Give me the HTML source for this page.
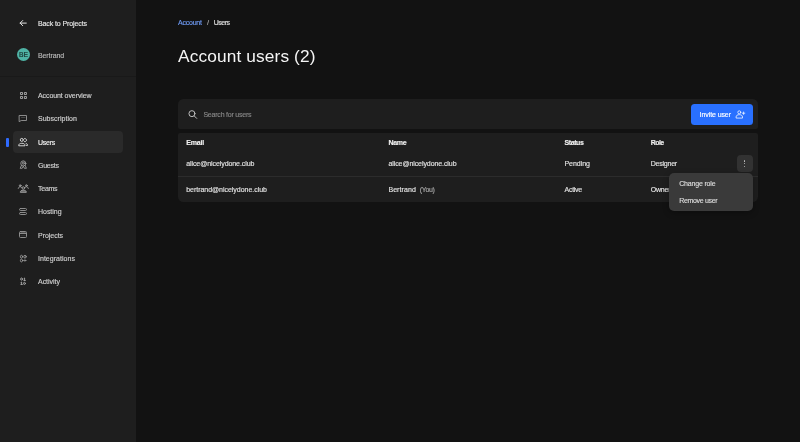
<!DOCTYPE html>
<html><head><meta charset="utf-8">
<style>
*{box-sizing:border-box;margin:0;padding:0}
html,body{width:800px;height:442px;overflow:hidden;background:#121212;font-family:"Liberation Sans",sans-serif;color:#e6e6e6;font-size:7px}
#root{position:absolute;left:0;top:0;width:800px;height:442px;will-change:transform}
.b{position:absolute}
.t{position:absolute;white-space:nowrap;line-height:10px;-webkit-text-stroke:0.150px currentColor}
.i{position:absolute;display:block;fill:none;stroke-linecap:round;stroke-linejoin:round;overflow:visible}
</style></head><body><div id="root">

<div class="b" style="left:0;top:0;width:136px;height:442px;background:#1e1e1e"></div>
<div class="b" style="left:0;top:75.700px;width:136px;height:1px;background:#191919"></div>
<div class="b" style="left:13px;top:131px;width:110px;height:22px;background:#2a2a2a;border-radius:4px"></div>
<div class="b" style="left:6px;top:138px;width:2.500px;height:8.500px;background:#2f6bff;border-radius:1px"></div>
<svg class="i" style="left:16px;top:16px;width:16px;height:16px;stroke:#e6e6e6;stroke-width:2.5" viewBox="-7.100 -7.100 16 16"><g transform="scale(0.39583) translate(-12,-12)"><path d="M20 12H4.500M11 5.500L4.500 12l6.500 6.500"/></g></svg>
<div class="t" style="left:38px;top:19.00px;font-size:7.0px;letter-spacing:-0.1px;color:#e6e6e6;">Back to Projects</div>
<div class="b" style="left:16.900px;top:48.200px;width:13px;height:13px;border-radius:50%;background:#4fb3a5"></div>
<div class="t" style="left:18.9px;top:49.98px;font-size:6.7px;letter-spacing:0.1px;color:#17302d;-webkit-text-stroke:0.2px #17302d;">BE</div>
<div class="t" style="left:38px;top:51.00px;font-size:7.0px;letter-spacing:-0.1px;color:#b8b8b8;">Bertrand</div>
<svg class="i" style="left:16px;top:88px;width:16px;height:16px;stroke:#b4b4b4;stroke-width:0.8" viewBox="-7.500 -7.500 16 16"><g stroke-width="1.050" stroke="#9c9c9c"><rect x="-3" y="-3" width="2" height="2" rx="0.400"/><rect x="0.900" y="-3" width="2.050" height="2" rx="0.400"/><rect x="-3" y="1" width="2" height="2" rx="0.400"/><rect x="0.900" y="1" width="2.050" height="2" rx="0.400"/></g></svg>
<div class="t" style="left:38px;top:91.00px;font-size:7.0px;letter-spacing:-0.08px;color:#cfcfcf;">Account overview</div>
<svg class="i" style="left:16px;top:111px;width:16px;height:16px;stroke:#b4b4b4;stroke-width:0.8" viewBox="-7.000 -7.000 16 16"><g stroke-width="0.950" stroke="#909090"><path d="M-3.500 -2.500H3.500V2.500H-1.800L-3.500 3.500Z"/><path d="M-1.500 -0.500H2" stroke="#4a4a4a"/></g></svg>
<div class="t" style="left:38px;top:114.00px;font-size:7.0px;letter-spacing:0.03px;color:#cfcfcf;">Subscription</div>
<svg class="i" style="left:16px;top:135px;width:16px;height:16px;stroke:#e0e0e0;stroke-width:0.8" viewBox="-7.300 -7.000 16 16"><g stroke-width="0.900"><circle cx="-1.500" cy="-2.100" r="1.500"/><path d="M-4.600 3.400c0-1.500 1.150-2.100 3.150-2.100s3.150.600 3.150 2.100z"/><path d="M1.100 -3.400A1.600 1.600 0 1 1 1.100 -0.400M2.800 1.400c1 .200 1.450.900 1.450 2H3"/></g></svg>
<div class="t" style="left:38px;top:138.00px;font-size:7.0px;letter-spacing:-0.25px;color:#f2f2f2;">Users</div>
<svg class="i" style="left:16px;top:157px;width:16px;height:16px;stroke:#b4b4b4;stroke-width:0.8" viewBox="-7.300 -7.700 16 16"><g stroke-width="0.850" stroke="#a2a2a2"><circle cx="0" cy="-1.300" r="2.550"/><circle cx="0" cy="-1.500" r="1.050"/><path d="M-1.900 0.800L-3.100 3.600H-1.100L0 1.500L1.100 3.600H3.100L1.900 0.800"/></g></svg>
<div class="t" style="left:38px;top:161.00px;font-size:7.0px;letter-spacing:-0.25px;color:#cfcfcf;">Guests</div>
<svg class="i" style="left:16px;top:181px;width:16px;height:16px;stroke:#b4b4b4;stroke-width:0.8" viewBox="-7.300 -7.500 16 16"><g stroke-width="0.850" stroke="#a6a6a6"><circle cx="0" cy="-0.500" r="1.250"/><path d="M-3 3.500c0-1.300 1.100-1.800 3-1.800s3 .500 3 1.800z" fill="#6a6a6a"/><circle cx="-3.100" cy="-2.900" r="0.850"/><circle cx="3.100" cy="-2.900" r="0.850"/><path d="M-5 -0.100c.300-1.100 1-1.700 1.900-1.700s1.200.300 1.500.800M5 -0.100c-.300-1.100-1-1.700-1.900-1.700s-1.200.300-1.500.800"/></g></svg>
<div class="t" style="left:38px;top:184.00px;font-size:7.0px;letter-spacing:-0.25px;color:#cfcfcf;">Teams</div>
<svg class="i" style="left:16px;top:204px;width:16px;height:16px;stroke:#b4b4b4;stroke-width:0.8" viewBox="-7.000 -7.500 16 16"><g stroke-width="0.950" stroke="#929292"><rect x="-3.500" y="-3" width="7" height="2" rx="1"/><rect x="-3.500" y="1" width="7" height="2" rx="1"/></g></svg>
<div class="t" style="left:38px;top:207.00px;font-size:7.0px;letter-spacing:-0.03px;color:#cfcfcf;">Hosting</div>
<svg class="i" style="left:16px;top:227px;width:16px;height:16px;stroke:#b4b4b4;stroke-width:0.8" viewBox="-7.000 -7.500 16 16"><g stroke-width="0.950" stroke="#929292"><rect x="-3.500" y="-3" width="7" height="6" rx="1"/><path d="M-3.500 -1H3.500"/><path d="M-2 -2H2.500" stroke="#555555"/><path d="M-2 1H2.200" stroke="#333333"/></g></svg>
<div class="t" style="left:38px;top:231.00px;font-size:7.0px;letter-spacing:-0.03px;color:#cfcfcf;">Projects</div>
<svg class="i" style="left:16px;top:251px;width:16px;height:16px;stroke:#b4b4b4;stroke-width:0.8" viewBox="-7.250 -7.500 16 16"><g stroke-width="0.900" stroke="#9c9c9c"><ellipse cx="-1.750" cy="-1.800" rx="1.100" ry="1.400"/><ellipse cx="1.750" cy="-1.800" rx="1.200" ry="1.400"/><ellipse cx="-1.750" cy="2" rx="1.100" ry="1.400"/><path d="M0.500 2H2.800" stroke="#b0b0b0"/><path d="M1.650 0.900V3.100" stroke="#6a6a6a"/></g></svg>
<div class="t" style="left:38px;top:254.00px;font-size:7.0px;letter-spacing:0.03px;color:#cfcfcf;">Integrations</div>
<svg class="i" style="left:16px;top:274px;width:16px;height:16px;stroke:#b4b4b4;stroke-width:0.8" viewBox="-7.000 -7.400 16 16"><g stroke-width="0.950" stroke="#a4a4a4"><ellipse cx="-1.450" cy="-2.300" rx="0.950" ry="1.100"/><path d="M1 -2.900L1.600 -3.400V-1M0.900 -0.900H2.300"/><path d="M-2.100 1.100L-1.400 0.600V3M-2.100 3.100H-0.700"/><ellipse cx="1.450" cy="2" rx="0.950" ry="1.100"/></g></svg>
<div class="t" style="left:38px;top:277.00px;font-size:7.0px;letter-spacing:-0.03px;color:#cfcfcf;">Activity</div>
<div class="t" style="left:178px;top:18.00px;font-size:7.0px;letter-spacing:-0.23px;color:#6f9bf5;">Account</div>
<div class="t" style="left:207.1px;top:17.59px;font-size:7.5px;letter-spacing:-0.1px;color:#a8a8a8;">/</div>
<div class="t" style="left:213.7px;top:18.00px;font-size:7.0px;letter-spacing:-0.48px;color:#e0e0e0;">Users</div>
<div class="t" id="h1" style="left:178px;top:44px;font-size:17.300px;line-height:24px;color:#f5f5f5;letter-spacing:0.130px;-webkit-text-stroke:0">Account users (2)</div>
<div class="b" style="left:177.800px;top:99.200px;width:580px;height:29.800px;background:#1e1e1e;border-radius:5.500px 5.500px 2px 2px"></div>
<svg class="i" style="left:185px;top:107px;width:16px;height:16px;stroke:#c0c0c0;stroke-width:2.3" viewBox="-7.600 -7.300 16 16"><g transform="scale(0.42917) translate(-12,-12)"><circle cx="10.500" cy="10.500" r="7"/><path d="M15.800 15.800L21.500 21.500"/></g></svg>
<div class="t" style="left:203.4px;top:110.00px;font-size:7.0px;letter-spacing:-0.21px;color:#868686;">Search for users</div>
<div class="b" style="left:691px;top:103.700px;width:62.300px;height:21.200px;background:#2970ff;border-radius:3.500px"></div>
<div class="t" style="left:699.6px;top:110.00px;font-size:7.0px;letter-spacing:-0.09px;color:#ffffff;">Invite user</div>
<svg class="i" style="left:732px;top:107px;width:16px;height:16px;stroke:#ffffff;stroke-width:0.75" viewBox="-7.300 -7.300 16 16"><circle cx="0" cy="-2" r="1.500"/><path d="M-3.200 3.400v-0.700c0-1.600 1.200-2.300 3.200-2.300s3.200.700 3.200 2.300v.700z"/><path d="M4.300 -2.300v2.400M3.100 -1.100h2.400"/></svg>
<div class="b" style="left:177.800px;top:132.800px;width:580px;height:68.900px;background:#1e1e1e;border-radius:2px 2px 5.500px 5.500px"></div>
<div class="b" style="left:177.800px;top:175.700px;width:580px;height:1px;background:#2c2c2c"></div>
<div class="t" style="left:186.2px;top:138.00px;font-size:7.0px;letter-spacing:-0.17px;color:#f0f0f0;font-weight:bold;">Email</div>
<div class="t" style="left:388.4px;top:138.00px;font-size:7.0px;letter-spacing:-0.27px;color:#f0f0f0;font-weight:bold;">Name</div>
<div class="t" style="left:564.5px;top:138.00px;font-size:7.0px;letter-spacing:-0.42px;color:#f0f0f0;font-weight:bold;">Status</div>
<div class="t" style="left:650.7px;top:138.00px;font-size:7.0px;letter-spacing:-0.55px;color:#f0f0f0;font-weight:bold;">Role</div>
<div class="t" style="left:186.2px;top:159.00px;font-size:7.0px;letter-spacing:-0.08px;color:#e2e2e2;">alice@nicelydone.club</div>
<div class="t" style="left:388.4px;top:159.00px;font-size:7.0px;letter-spacing:-0.08px;color:#e2e2e2;">alice@nicelydone.club</div>
<div class="t" style="left:564.5px;top:159.00px;font-size:7.0px;letter-spacing:-0.05px;color:#e2e2e2;">Pending</div>
<div class="t" style="left:650.7px;top:159.00px;font-size:7.0px;letter-spacing:-0.22px;color:#e2e2e2;">Designer</div>
<div class="t" style="left:186.2px;top:185.00px;font-size:7.0px;letter-spacing:-0.03px;color:#e2e2e2;">bertrand@nicelydone.club</div>
<div class="t" style="left:388.4px;top:185.00px;font-size:7.0px;letter-spacing:0.08px;color:#e2e2e2;">Bertrand</div>
<div class="t" style="left:564.5px;top:185.00px;font-size:7.0px;letter-spacing:-0.27px;color:#e2e2e2;">Active</div>
<div class="t" style="left:650.7px;top:185.00px;font-size:7.0px;letter-spacing:-0.2px;color:#e2e2e2;">Owner</div>
<div class="t" style="left:419.7px;top:185.00px;font-size:7.0px;letter-spacing:-0.33px;color:#a8a8a8;">(You)</div>
<div class="b" style="left:736.500px;top:155.300px;width:16.800px;height:16.600px;background:#323232;border-radius:4px"></div>
<div class="b" style="left:744.200px;top:160.45px;width:1.300px;height:1.300px;background:#c0c0c0;border-radius:50%"></div>
<div class="b" style="left:744.200px;top:163.05px;width:1.300px;height:1.300px;background:#c0c0c0;border-radius:50%"></div>
<div class="b" style="left:744.200px;top:165.65px;width:1.300px;height:1.300px;background:#c0c0c0;border-radius:50%"></div>
<div class="b" style="left:669px;top:173.200px;width:84.400px;height:37.800px;background:#3a3a3a;border-radius:5px;box-shadow:0 2px 6px rgba(0,0,0,0.300)"></div>
<div class="t" style="left:679.2px;top:179.00px;font-size:7.0px;letter-spacing:-0.18px;color:#dcdcdc;">Change role</div>
<div class="t" style="left:679.2px;top:196.00px;font-size:7.0px;letter-spacing:-0.32px;color:#dcdcdc;">Remove user</div>
</div></body></html>
